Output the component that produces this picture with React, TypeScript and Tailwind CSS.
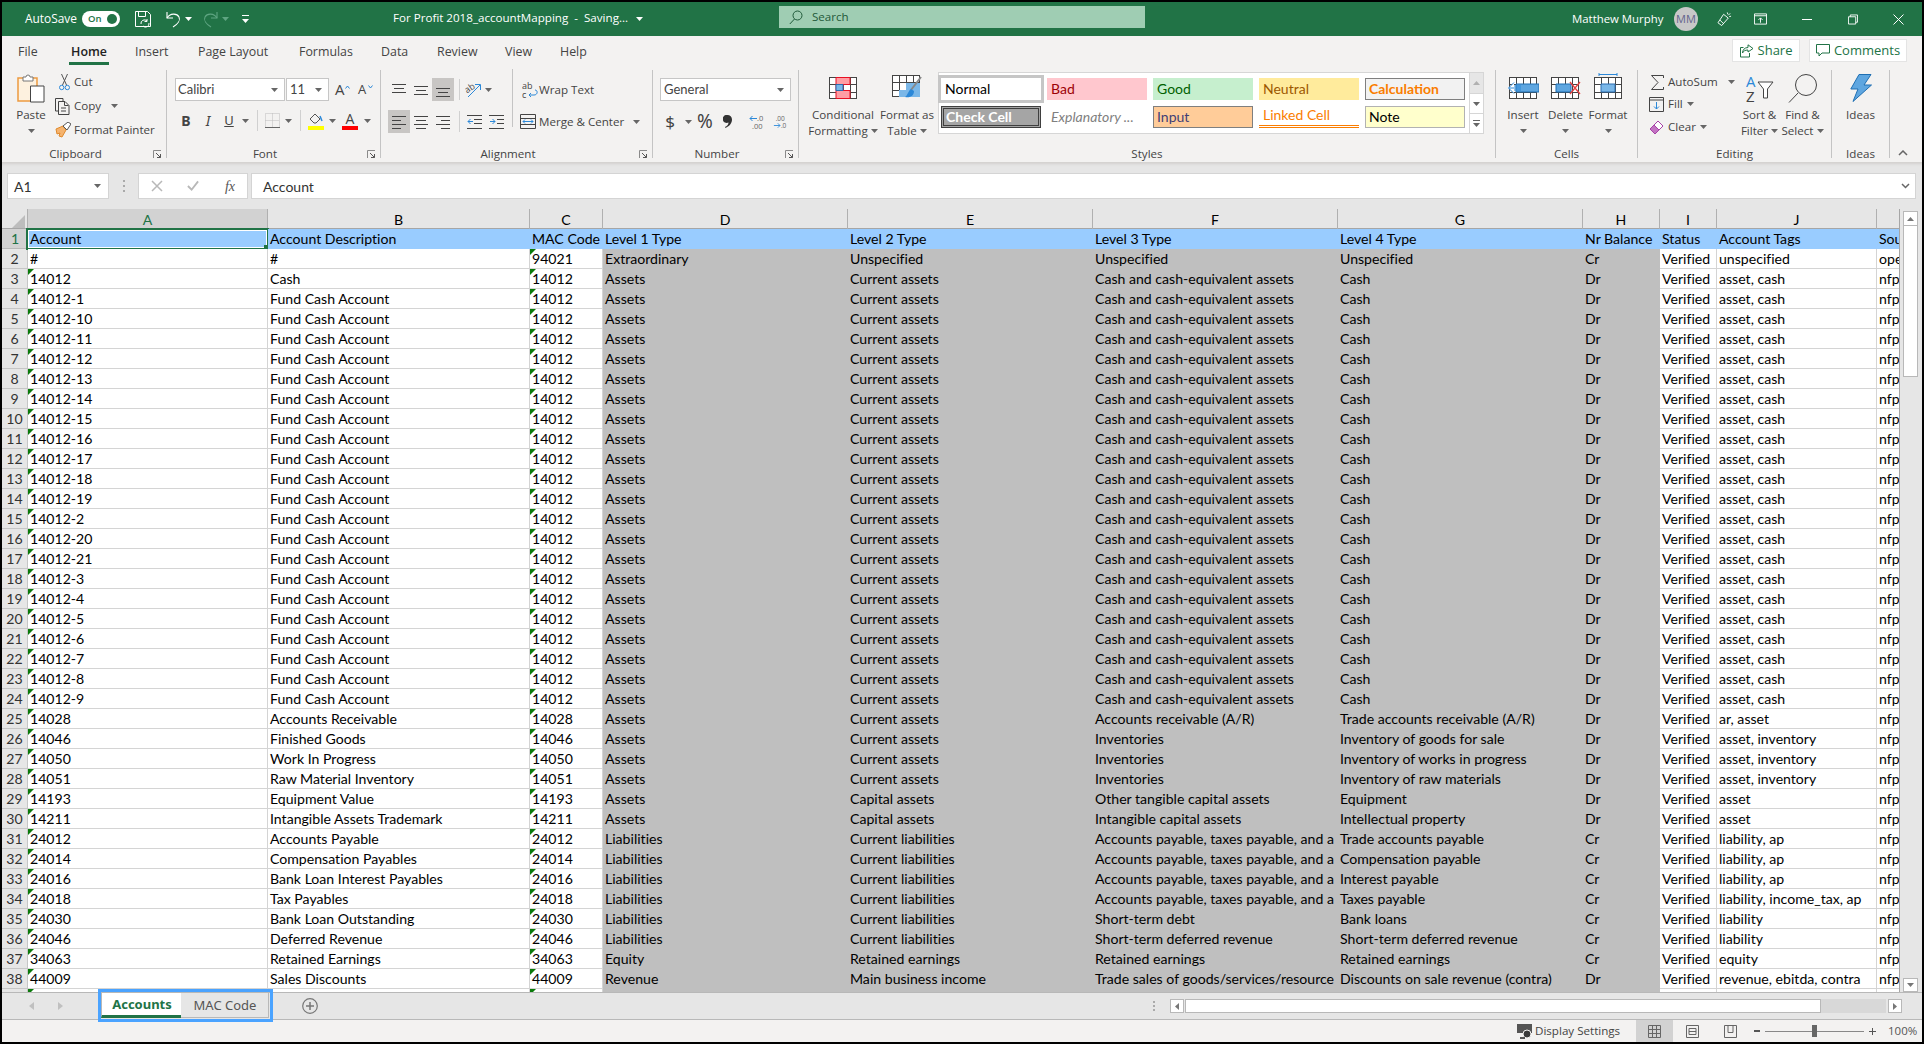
import React from "react";

const cols = "grid grid-cols-[26px_240px_262px_73px_245px_245px_245px_245px_77px_57px_160px_23px]";

type Row = { a: string; b: string; c: string; rest: string[]; noTriA?: boolean };

const cash = (a: string, b: string): Row => ({
  a, b, c: "14012",
  rest: ["Assets", "Current assets", "Cash and cash-equivalent assets", "Cash", "Dr", "Verified", "asset, cash", "nfp"],
});

const fundSuffixes = ["1", "10", "11", "12", "13", "14", "15", "16", "17", "18", "19", "2", "20", "21", "3", "4", "5", "6", "7", "8", "9"];

const rows: Row[] = [
  { a: "#", b: "#", c: "94021", rest: ["Extraordinary", "Unspecified", "Unspecified", "Unspecified", "Cr", "Verified", "unspecified", "ope"], noTriA: true },
  cash("14012", "Cash"),
  ...fundSuffixes.map((s) => cash("14012-" + s, "Fund Cash Account")),
  { a: "14028", b: "Accounts Receivable", c: "14028", rest: ["Assets", "Current assets", "Accounts receivable (A/R)", "Trade accounts receivable (A/R)", "Dr", "Verified", "ar, asset", "nfp"] },
  { a: "14046", b: "Finished Goods", c: "14046", rest: ["Assets", "Current assets", "Inventories", "Inventory of goods for sale", "Dr", "Verified", "asset, inventory", "nfp"] },
  { a: "14050", b: "Work In Progress", c: "14050", rest: ["Assets", "Current assets", "Inventories", "Inventory of works in progress", "Dr", "Verified", "asset, inventory", "nfp"] },
  { a: "14051", b: "Raw Material Inventory", c: "14051", rest: ["Assets", "Current assets", "Inventories", "Inventory of raw materials", "Dr", "Verified", "asset, inventory", "nfp"] },
  { a: "14193", b: "Equipment Value", c: "14193", rest: ["Assets", "Capital assets", "Other tangible capital assets", "Equipment", "Dr", "Verified", "asset", "nfp"] },
  { a: "14211", b: "Intangible Assets Trademark", c: "14211", rest: ["Assets", "Capital assets", "Intangible capital assets", "Intellectual property", "Dr", "Verified", "asset", "nfp"] },
  { a: "24012", b: "Accounts Payable", c: "24012", rest: ["Liabilities", "Current liabilities", "Accounts payable, taxes payable, and a", "Trade accounts payable", "Cr", "Verified", "liability, ap", "nfp"] },
  { a: "24014", b: "Compensation Payables", c: "24014", rest: ["Liabilities", "Current liabilities", "Accounts payable, taxes payable, and a", "Compensation payable", "Cr", "Verified", "liability, ap", "nfp"] },
  { a: "24016", b: "Bank Loan Interest Payables", c: "24016", rest: ["Liabilities", "Current liabilities", "Accounts payable, taxes payable, and a", "Interest payable", "Cr", "Verified", "liability, ap", "nfp"] },
  { a: "24018", b: "Tax Payables", c: "24018", rest: ["Liabilities", "Current liabilities", "Accounts payable, taxes payable, and a", "Taxes payable", "Cr", "Verified", "liability, income_tax, ap", "nfp"] },
  { a: "24030", b: "Bank Loan Outstanding", c: "24030", rest: ["Liabilities", "Current liabilities", "Short-term debt", "Bank loans", "Cr", "Verified", "liability", "nfp"] },
  { a: "24046", b: "Deferred Revenue", c: "24046", rest: ["Liabilities", "Current liabilities", "Short-term deferred revenue", "Short-term deferred revenue", "Cr", "Verified", "liability", "nfp"] },
  { a: "34063", b: "Retained Earnings", c: "34063", rest: ["Equity", "Retained earnings", "Retained earnings", "Retained earnings", "Cr", "Verified", "equity", "nfp"] },
  { a: "44009", b: "Sales Discounts", c: "44009", rest: ["Revenue", "Main business income", "Trade sales of goods/services/resource", "Discounts on sale revenue (contra)", "Dr", "Verified", "revenue, ebitda, contra", "nfp"] },
  { a: "", b: "", c: "", rest: ["", "", "", "", "", "", "", ""] },
];

const headers = ["Account", "Account Description", "MAC Code", "Level 1 Type", "Level 2 Type", "Level 3 Type", "Level 4 Type", "Nr Balance", "Status", "Account Tags", "Sou"];
const letters = ["A", "B", "C", "D", "E", "F", "G", "H", "I", "J", ""];

const Caret = ({ c = "#666" }: { c?: string }) => (
  <svg width="7" height="4" viewBox="0 0 7 4" className="shrink-0"><path d="M0 0h7L3.5 4z" fill={c} /></svg>
);

const Launcher = () => (
  <svg width="9" height="9" viewBox="0 0 9 9"><path d="M.5 8V.5H8" fill="none" stroke="#8a8a8a" /><path d="M3 3l4.5 4.5M4 7.5h3.5V4" fill="none" stroke="#555" /></svg>
);

const Sep = ({ c = "h-[88px]" }: { c?: string }) => <div className={"w-px bg-[#c4c4c4] self-center shrink-0 " + c} />;
const SmallSep = () => <div className="w-px h-[21px] bg-[#d0d0d0]" />;

const Slot = ({ c, children }: { c: string; children?: React.ReactNode }) => (
  <div className={"flex items-center justify-center shrink-0 " + c}>{children}</div>
);

const Group = ({ c, label, launcher, children }: { c: string; label: string; launcher?: boolean; children: React.ReactNode }) => (
  <div className={"flex flex-col h-[96px] shrink-0 " + c}>
    <div className="h-[80px] flex">{children}</div>
    <div className="h-[16px] flex items-center text-[11.6px] text-[#444]">
      <div className="flex-1 text-center leading-[16px]">{label}</div>
      {launcher && <div className="w-[17px] flex justify-center"><Launcher /></div>}
    </div>
  </div>
);

const AlignIcon = ({ lines }: { lines: [number, number, number][] }) => (
  <svg width="16" height="16" viewBox="0 0 16 16">
    {lines.map(([x1, x2, y], i) => <path key={i} d={`M${x1} ${y}.5H${x2}`} stroke="#444" />)}
  </svg>
);

const TableGrid = ({ w = 28, h = 22, sy = 0 }: { w?: number; h?: number; sy?: number }) => (
  <>
    <rect x="0.5" y={sy + 0.5} width={w - 1} height={h - 1} fill="#fff" stroke="#444" />
    {[1, 2, 3].map((i) => <path key={i} d={`M${Math.round((i * w) / 4) + 0.5} ${sy}v${h}`} stroke="#444" />)}
    {[1, 2].map((i) => <path key={i} d={`M0 ${sy + Math.round((i * h) / 3) + 0.5}h${w}`} stroke="#444" />)}
  </>
);

const BigBtn = ({ c, icon, lines, iconTop }: { c: string; icon: React.ReactNode; lines: React.ReactNode[]; iconTop: string }) => (
  <div className={"flex flex-col items-center shrink-0 text-[11.6px] leading-[16px] text-[#444] " + c}>
    <div className={"flex items-end justify-center " + iconTop}>{icon}</div>
    {lines.map((l, i) => <div key={i} className="flex items-center gap-[3px] whitespace-nowrap h-[16px]">{l}</div>)}
  </div>
);

const Tile = ({ c, children }: { c: string; children: React.ReactNode }) => (
  <div className={"h-[22px] w-[100px] flex items-center pb-[2px] text-[14px] font-['Lato'] whitespace-nowrap " + c}>{children}</div>
);

export default function App() {
  return (
    <div className="w-[1924px] h-[1044px] bg-black p-[2px] overflow-hidden font-['Open_Sans'] text-[11.6px] text-[#444]">
      <div className="w-[1920px] h-[1040px] flex flex-col bg-[#f3f2f1] overflow-hidden">
        {/* Title bar */}
        <div className="h-[34px] bg-[#217346] flex items-center text-white shrink-0">
          <div className="ml-[23px] w-[57px] text-[11.9px]">AutoSave</div>
          <div className="w-[38px] h-[16px] rounded-full bg-white flex items-center justify-between pl-[6px] pr-[3px]">
            <span className="text-[9.5px] font-semibold text-[#217346] leading-none">On</span>
            <span className="w-[10px] h-[10px] rounded-full bg-[#217346]" />
          </div>
          <Slot c="ml-[15px] w-[16px]">
            <svg width="16" height="17" viewBox="0 0 16 17" fill="none" stroke="#fff"><path d="M.5.5h12l3 3v12H.5z" /><path d="M3.5.5v5h7v-5" /><path d="M6 13a3.5 3.5 0 0 1 6-3M14 12a3.5 3.5 0 0 1-6 3M12 8v2.5H9.5" /></svg>
          </Slot>
          <Slot c="ml-[15px] w-[15px]">
            <svg width="15" height="17" viewBox="0 0 15 17" fill="none" stroke="#fff" strokeWidth="1.1"><path d="M1 1v6h6" /><path d="M1 7c3-5 10-5 12-1 1.500 3-1 7-6 10" /></svg>
          </Slot>
          <Slot c="ml-[3px] w-[8px]"><Caret c="#fff" /></Slot>
          <Slot c="ml-[11px] w-[15px]">
            <svg width="15" height="17" viewBox="0 0 15 17" fill="none" stroke="#5fa582" strokeWidth="1.1"><path d="M14 1v6H8" /><path d="M14 7C11 2 4 2 2 6c-1.500 3 1 7 6 10" /></svg>
          </Slot>
          <Slot c="ml-[3px] w-[8px]"><Caret c="#5fa582" /></Slot>
          <Slot c="ml-[12px] w-[8px]">
            <svg width="7" height="8" viewBox="0 0 7 8"><path d="M0 .5h7" stroke="#fff" /><path d="M0 4h7L3.500 8z" fill="#fff" /></svg>
          </Slot>
          <div className="ml-[144px] w-[234px] whitespace-nowrap -mt-[2px]">For Profit 2018_accountMapping&nbsp; -&nbsp; Saving...</div>
          <Slot c="ml-[8px] w-[8px]"><Caret c="#fff" /></Slot>
          <div className="ml-[136px] w-[366px] h-[22px] bg-[#9fcdb3] flex items-center text-[#1f5a3a] -mt-[4px]">
            <svg className="ml-[10px]" width="14" height="15" viewBox="0 0 14 15" fill="none" stroke="#1f5a3a"><circle cx="8.500" cy="5.500" r="4.500" /><path d="M5.500 9L.8 14" /></svg>
            <span className="ml-[9px]">Search</span>
          </div>
          <div className="ml-[427px] w-[91px] text-[11.4px] whitespace-nowrap">Matthew Murphy</div>
          <div className="ml-[11px] w-[24px] h-[24px] rounded-full bg-[#c8c8c8] flex items-center justify-center text-[11px] text-[#64648c]">MM</div>
          <Slot c="ml-[19px] w-[15px]">
            <svg width="16" height="16" viewBox="0 0 16 16" fill="none" stroke="#fff"><path d="M1 12L7 3l5 4-7 8z" /><path d="M3 9l4 4M11 1l.5 2M14 2l-2 2M15 5l-2 .5" /></svg>
          </Slot>
          <Slot c="ml-[22px] w-[13px]">
            <svg width="14" height="12" viewBox="0 0 14 12" fill="none" stroke="#fff"><path d="M.5.5h13v11H.5zM.5 2.500h13M7 10V5M4.800 7L7 4.800 9.200 7" /></svg>
          </Slot>
          <Slot c="ml-[35px] w-[10px]"><div className="w-[11px] h-px bg-white" /></Slot>
          <Slot c="ml-[36px] w-[10px]">
            <svg width="11" height="11" viewBox="0 0 11 11" fill="none" stroke="#fff"><path d="M.5 2.500h8v8h-8zM2.500 2.500v-2h8v8h-2" /></svg>
          </Slot>
          <Slot c="ml-[35px] w-[11px]">
            <svg width="11" height="11" viewBox="0 0 11 11" stroke="#fff"><path d="M.5.5l10 10M10.500.5l-10 10" /></svg>
          </Slot>
        </div>

        {/* Ribbon tabs */}
        <div className="h-[30px] flex items-start text-[12.4px] text-[#444] shrink-0">
          <div className="ml-[16px] w-[20px] mt-[7px] leading-[18px]">File</div>
          <div className="ml-[32px] relative mt-[7px] leading-[18px] w-[38px] text-center text-[#222] font-semibold">
            Home
            <div className="absolute -left-px -right-px top-[19px] h-[3px] bg-[#217346]" />
          </div>
          <div className="ml-[27px] w-[32px] mt-[7px] leading-[18px]">Insert</div>
          <div className="ml-[31px] w-[71px] mt-[7px] leading-[18px] whitespace-nowrap">Page Layout</div>
          <div className="ml-[30px] w-[53px] mt-[7px] leading-[18px]">Formulas</div>
          <div className="ml-[29px] w-[27px] mt-[7px] leading-[18px]">Data</div>
          <div className="ml-[29px] w-[40px] mt-[7px] leading-[18px]">Review</div>
          <div className="ml-[28px] w-[27px] mt-[7px] leading-[18px]">View</div>
          <div className="ml-[28px] w-[27px] mt-[7px] leading-[18px]">Help</div>
          <div className="ml-[1145px] mt-[3px] w-[68px] h-[23px] bg-white border border-[#e4e4e4] flex items-center justify-center gap-[4px] text-[#217346] text-[13px]">
            <svg width="14" height="14" viewBox="0 0 14 14" fill="none" stroke="#217346"><path d="M8 .8l5 3.700-5 3.500V6C5 6 3.500 7 2.500 9c0-3 2-5.500 5.500-5.500zM9.500 9v4H.5V3.500h3" /></svg>
            <span>Share</span>
          </div>
          <div className="ml-[9px] mt-[3px] w-[98px] h-[23px] bg-white border border-[#e4e4e4] flex items-center justify-center gap-[4px] text-[#217346] text-[13px]">
            <svg width="14" height="13" viewBox="0 0 14 13" fill="none" stroke="#217346"><path d="M.5.500h13v8.500H6l-3 3V9H.5z" /></svg>
            <span>Comments</span>
          </div>
        </div>

        {/* Ribbon body */}
        <div className="h-[96px] flex shrink-0">
          <Group c="w-[164px]" label="Clipboard" launcher>
            <div className="w-[53px] pl-[5px] flex flex-col items-center pt-[8px] leading-[16px]">
              <svg width="28" height="30" viewBox="0 0 28 30" fill="none">
                <path d="M1 4h19v23H1z" fill="#fdf1df" stroke="#ed9b40" strokeWidth="1.500" />
                <path d="M6 3h3a2 2 0 0 1 4 0h3v4H6z" fill="#fff" stroke="#777" />
                <path d="M13.500 12h13.500v16H13.500z" fill="#fff" stroke="#444" />
              </svg>
              <div className="mt-[3px]">Paste</div>
              <div className="mt-[6px]"><Caret /></div>
            </div>
            <div className="pt-[4px] flex flex-col">
              <div className="h-[24px] flex items-center">
                <Slot c="w-[19px]">
                  <svg width="11" height="17" viewBox="0 0 11 17" fill="none"><path d="M2.500 0l5 11M8.500 0l-5 11" stroke="#555" /><circle cx="2.700" cy="13.500" r="2.200" stroke="#2b88d8" /><circle cx="8.300" cy="13.500" r="2.200" stroke="#2b88d8" /></svg>
                </Slot>
                <span>Cut</span>
              </div>
              <div className="h-[24px] flex items-center">
                <Slot c="w-[19px] justify-start">
                  <svg width="16" height="17" viewBox="0 0 16 17" fill="none" stroke="#444"><path d="M3 13H.5V.5H8V3M3.500 3.500H10l4 4v9H3.500zM9.500 3.500v4h4M6 10h5M6 13h5" /></svg>
                </Slot>
                <span>Copy</span>
                <span className="ml-[10px]"><Caret /></span>
              </div>
              <div className="h-[24px] flex items-center">
                <Slot c="w-[19px] justify-start">
                  <svg width="16" height="16" viewBox="0 0 16 16" fill="none"><path d="M1 7l7-3 3 4-4 7-3-1 1-3-3 1z" fill="#f5b36e" stroke="#e08a2c" /><path d="M8 4l5-4 3 2-4 6z" fill="#fff" stroke="#555" /></svg>
                </Slot>
                <span className="whitespace-nowrap">Format Painter</span>
              </div>
            </div>
          </Group>
          <Sep />
          <Group c="w-[213px]" label="Font" launcher>
            <div className="pt-[12px] pl-[8px] flex flex-col">
              <div className="flex items-center">
                <div className="w-[110px] h-[23px] bg-white border border-[#c6c6c6] flex items-center justify-between pl-[2px] pr-[6px] font-['Lato'] text-[13px]">Calibri<Caret /></div>
                <div className="ml-px w-[43px] h-[23px] bg-white border border-[#c6c6c6] flex items-center justify-between pl-[3px] pr-[6px] font-['Lato'] text-[13px]">11<Caret /></div>
                <div className="ml-[6px] w-[10px] text-[15px] leading-none">A</div>
                <svg width="5" height="4" viewBox="0 0 5 4" className="mb-[6px]" fill="none" stroke="#2b88d8"><path d="M.5 3.500l2-2.500 2 2.500" /></svg>
                <div className="ml-[8px] w-[10px] text-[13px] leading-none">A</div>
                <svg width="5" height="4" viewBox="0 0 5 4" className="mb-[6px]" fill="none" stroke="#2b88d8"><path d="M.5.500l2 2.500 2-2.500" /></svg>
              </div>
              <div className="flex items-center mt-[8px] h-[23px]">
                <Slot c="w-[22px] font-bold text-[14px] font-['Noto_Sans'] text-[#444]">B</Slot>
                <Slot c="w-[22px] italic text-[14px] font-['Noto_Sans'] text-[#444]">I</Slot>
                <Slot c="w-[20px] underline text-[13px] font-['Noto_Sans'] text-[#444]">U</Slot>
                <Slot c="w-[13px]"><Caret /></Slot>
                <Slot c="w-[10px]"><SmallSep /></Slot>
                <Slot c="w-[20px]">
                  <svg width="15" height="15" viewBox="0 0 15 15" fill="none"><path d="M.5.500h14v14H.5zM7.500.5v14M.5 7.500h14" stroke="#bdbdbd" strokeDasharray="1 1" /><path d="M0 14.500h15" stroke="#666" /></svg>
                </Slot>
                <Slot c="w-[13px]"><Caret /></Slot>
                <Slot c="w-[11px]"><SmallSep /></Slot>
                <Slot c="w-[20px]">
                  <svg width="16" height="18" viewBox="0 0 16 18" fill="none"><path d="M2 7l5-5 5 5-4 4H6z" stroke="#555" /><path d="M14 9l-2-5" stroke="#2b88d8" strokeWidth="1.500" /><path d="M0 14h16v4H0z" fill="#ffff00" /></svg>
                </Slot>
                <Slot c="w-[12px]"><Caret /></Slot>
                <Slot c="w-[23px]">
                  <svg width="16" height="18" viewBox="0 0 16 18" fill="none"><text x="8" y="12" textAnchor="middle" fontSize="14" fill="#444" fontFamily="Open Sans">A</text><path d="M0 14h16v4H0z" fill="#ff0000" /></svg>
                </Slot>
                <Slot c="w-[12px]"><Caret /></Slot>
              </div>
            </div>
          </Group>
          <Sep />
          <Group c="w-[271px]" label="Alignment" launcher>
            <div className="ml-[7px] w-[120px] pt-[12px] flex flex-col">
              <div className="flex items-center h-[23px]">
                <Slot c="w-[22px] h-[23px]"><AlignIcon lines={[[1, 15, 2], [3, 13, 6], [1, 15, 10]]} /></Slot>
                <Slot c="w-[22px] h-[23px]"><AlignIcon lines={[[1, 15, 4], [3, 13, 8], [1, 15, 12]]} /></Slot>
                <Slot c="w-[22px] h-[23px] bg-[#c8c6c4]"><AlignIcon lines={[[1, 15, 6], [3, 13, 10], [1, 15, 14]]} /></Slot>
                <Slot c="w-[10px]"><SmallSep /></Slot>
                <Slot c="w-[20px]">
                  <svg width="18" height="16" viewBox="0 0 18 16" fill="none"><text x="0" y="9" fontSize="9" fill="#444" fontFamily="Open Sans" transform="rotate(-35 5 7)">ab</text><path d="M3 15L15 3M10 2.500h5.500V8" stroke="#2b88d8" /></svg>
                </Slot>
                <Slot c="w-[8px]"><Caret /></Slot>
              </div>
              <div className="flex items-center h-[23px] mt-[9px]">
                <Slot c="w-[22px] h-[23px] bg-[#c8c6c4]"><AlignIcon lines={[[1, 15, 2], [1, 10, 6], [1, 15, 10], [1, 10, 14]]} /></Slot>
                <Slot c="w-[22px] h-[23px]"><AlignIcon lines={[[1, 15, 2], [3, 13, 6], [1, 15, 10], [3, 13, 14]]} /></Slot>
                <Slot c="w-[22px] h-[23px]"><AlignIcon lines={[[1, 15, 2], [6, 15, 6], [1, 15, 10], [6, 15, 14]]} /></Slot>
                <Slot c="w-[10px]"><SmallSep /></Slot>
                <Slot c="w-[21px]">
                  <svg width="15" height="14" viewBox="0 0 15 14" fill="none"><path d="M0 .5h15M7 4.500h8M7 8.500h8M0 13.500h15" stroke="#444" /><path d="M6 6.500H1M3.500 4L1 6.500 3.500 9" stroke="#2b88d8" /></svg>
                </Slot>
                <Slot c="w-[22px]">
                  <svg width="15" height="14" viewBox="0 0 15 14" fill="none"><path d="M0 .5h15M8 4.500h7M8 8.500h7M0 13.500h15" stroke="#444" /><path d="M1 6.500h5M3.500 4L6 6.500 3.500 9" stroke="#2b88d8" /></svg>
                </Slot>
              </div>
            </div>
            <Sep c="h-[58px] mt-[-16px] ml-[4px]" />
            <div className="pt-[12px] flex flex-col whitespace-nowrap">
              <div className="flex items-center h-[23px] ml-[9px]">
                <svg width="16" height="18" viewBox="0 0 16 18" fill="none"><text x="0" y="8" fontSize="9" fill="#444" fontFamily="Open Sans">ab</text><text x="0" y="17" fontSize="9" fill="#444" fontFamily="Open Sans">c</text><path d="M13 9c3 0 3 5-1 5H7M9 12l-2 2 2 2" stroke="#2b88d8" /></svg>
                <span className="ml-[1px]">Wrap Text</span>
              </div>
              <div className="flex items-center h-[23px] mt-[9px] ml-[7px]">
                <svg width="16" height="15" viewBox="0 0 16 15" fill="none"><path d="M.5.500h15v14H.5zM.5 4.500h15M.5 10.500h15" stroke="#444" /><path d="M3 7.500h10M5 5.500l-2 2 2 2M11 5.500l2 2-2 2" stroke="#2b88d8" /></svg>
                <span className="ml-[3px] w-[86px]">Merge &amp; Center</span>
                <span className="ml-[8px]"><Caret /></span>
              </div>
            </div>
          </Group>
          <Sep />
          <Group c="w-[145px]" label="Number" launcher>
            <div className="ml-[7px] pt-[12px] flex flex-col">
              <div className="w-[131px] h-[23px] bg-white border border-[#c6c6c6] flex items-center justify-between pl-[3px] pr-[6px] font-['Lato'] text-[13px]">General<Caret /></div>
              <div className="flex items-center h-[23px] mt-[9px]">
                <Slot c="w-[20px] text-[17px] font-['Noto_Sans']">$</Slot>
                <Slot c="w-[16px]"><Caret /></Slot>
                <Slot c="w-[18px] text-[19px] leading-none font-['Noto_Sans']">%</Slot>
                <Slot c="w-[26px]">
                  <svg width="9" height="13" viewBox="0 0 9 13"><path d="M4.500 0a4.500 4.500 0 0 1 4.500 4.500c0 4-3 7-6.500 8.500l-.5-1c2-1 3.500-2.500 3.500-4.500a4 4 0 1 1-1-7.500z" fill="#333" /></svg>
                </Slot>
                <Slot c="w-[0px]"><SmallSep /></Slot>
                <Slot c="w-[33px]">
                  <svg width="16" height="16" viewBox="0 0 16 16" fill="none"><text x="8" y="7" fontSize="7.500" fill="#666" fontFamily="Open Sans">.0</text><text x="3" y="15" fontSize="7.500" fill="#666" fontFamily="Open Sans">.00</text><path d="M8 4.500H1M3.500 2L1 4.500 3.500 7" stroke="#2b88d8" /></svg>
                </Slot>
                <Slot c="w-[14px]">
                  <svg width="16" height="16" viewBox="0 0 16 16" fill="none"><text x="3" y="7" fontSize="7.500" fill="#666" fontFamily="Open Sans">.00</text><text x="9" y="15" fontSize="7.500" fill="#666" fontFamily="Open Sans">.0</text><path d="M1 12h7M5.500 9.500L8 12l-2.500 2.500" stroke="#2b88d8" /></svg>
                </Slot>
              </div>
            </div>
          </Group>
          <Sep />
          <Group c="w-[696px]" label="Styles">
            <BigBtn
              c="ml-[6px] w-[76px]"
              iconTop="mt-[11px] mb-[8px] h-[22px]"
              icon={
                <svg width="28" height="22" viewBox="0 0 28 22" fill="none">
                  <TableGrid />
                  <path d="M7 .5h14v7H14v6h7v8H7V.5z" fill="#ff9da4" stroke="#e81123" />
                  <path d="M7 7.500h7v6H7z" fill="#7ab7e8" stroke="#2b6cb0" />
                </svg>
              }
              lines={["Conditional", <>Formatting <Caret /></>]}
            />
            <BigBtn
              c="w-[52px]"
              iconTop="mt-[11px] mb-[8px] h-[22px]"
              icon={
                <svg width="31" height="24" viewBox="0 0 31 24" fill="none">
                  <TableGrid />
                  <path d="M14 8h14v14H7v-7h7z" fill="#7ab7e8" />
                  <path d="M29 2L19 15" stroke="#888" strokeWidth="2" />
                  <path d="M19 14c-3 2-3 6-6 8 5 1 9-1 9-6z" fill="#2b88d8" />
                </svg>
              }
              lines={["Format as", <>Table <Caret /></>]}
            />
            <div className="ml-[5px] mt-[6px] w-[546px] h-[62px] bg-white border border-[#d6d6d6] flex">
              <div className="flex-1 pl-[2px] pt-[5px] grid grid-cols-[repeat(5,100px)] gap-x-[6px] gap-y-[6px] content-start">
                <Tile c="pl-[4px] bg-white text-black outline-3 outline-[#c6c6c6]">Normal</Tile>
                <Tile c="pl-[4px] bg-[#ffc7ce] text-[#9c0006]">Bad</Tile>
                <Tile c="pl-[4px] bg-[#c6efce] text-[#006100]">Good</Tile>
                <Tile c="pl-[4px] bg-[#ffeb9c] text-[#9c5700]">Neutral</Tile>
                <Tile c="pl-[3px] bg-[#f2f2f2] text-[#fa7d00] font-bold border border-[#7f7f7f]">Calculation</Tile>
                <Tile c="pl-[2px] bg-[#a5a5a5] text-white font-bold border-[3px] border-double border-[#3f3f3f]">Check Cell</Tile>
                <Tile c="pl-[4px] text-[#7f7f7f] italic">Explanatory ...</Tile>
                <Tile c="pl-[3px] bg-[#ffcc99] text-[#3f3f76] border border-[#7f7f7f]">Input</Tile>
                <Tile c="pl-[4px] text-[#fa7d00] border-b-[3px] border-double border-[#fa7d00]">Linked Cell</Tile>
                <Tile c="pl-[3px] bg-[#ffffcc] text-black border border-[#b2b2b2]">Note</Tile>
              </div>
              <div className="w-[14px] flex flex-col border-l border-[#d6d6d6]">
                <div className="h-[21px] bg-[#e6e6e6] border-b border-[#d6d6d6] flex items-center justify-center"><svg width="7" height="4" viewBox="0 0 7 4"><path d="M0 4h7L3.500 0z" fill="#b0b0b0" /></svg></div>
                <div className="h-[20px] border-b border-[#d6d6d6] flex items-center justify-center"><Caret /></div>
                <div className="flex-1 flex flex-col items-center justify-center gap-[2px]"><div className="w-[7px] h-px bg-[#666]" /><Caret /></div>
              </div>
            </div>
          </Group>
          <Sep />
          <Group c="w-[141px]" label="Cells">
            <BigBtn
              c="ml-[6px] w-[42px]"
              iconTop="mt-[11px] mb-[8px] h-[22px]"
              icon={
                <svg width="32" height="22" viewBox="0 0 32 22" fill="none">
                  <g transform="translate(2 0)"><TableGrid /></g>
                  <path d="M9 7h23v8H9z" fill="#5ea6e0" stroke="#1f6fb2" />
                  <path d="M14 11H2M7 5.500L1.500 11 7 16.500M7 9h7M7 13h7" stroke="#2b88d8" fill="#fff" />
                </svg>
              }
              lines={["Insert", <Caret />]}
            />
            <BigBtn
              c="w-[43px]"
              iconTop="mt-[11px] mb-[8px] h-[22px]"
              icon={
                <svg width="30" height="22" viewBox="0 0 30 22" fill="none">
                  <TableGrid w={28} />
                  <path d="M5 7h15v8H5z" fill="#5ea6e0" stroke="#1f6fb2" />
                  <path d="M19 5l10 12M29 5L19 17" stroke="#e8403f" strokeWidth="1.300" />
                </svg>
              }
              lines={["Delete", <Caret />]}
            />
            <BigBtn
              c="w-[42px]"
              iconTop="mt-[7px] mb-[8px] h-[26px]"
              icon={
                <svg width="28" height="26" viewBox="0 0 28 26" fill="none">
                  <path d="M5 0v3M23 0v3M5 1.500h18" stroke="#2b88d8" />
                  <g transform="translate(0 4)"><TableGrid /></g>
                  <path d="M7 11h14v8H7z" fill="#7ab7e8" stroke="#2b6cb0" />
                </svg>
              }
              lines={["Format", <Caret />]}
            />
          </Group>
          <Sep />
          <Group c="w-[193px]" label="Editing">
            <div className="ml-[11px] w-[89px] pt-[5px] flex flex-col">
              <div className="h-[22px] flex items-center">
                <svg className="ml-[2px]" width="13" height="15" viewBox="0 0 13 15" fill="none" stroke="#444"><path d="M12.500 3V.5H.5L7 7.500.5 14.500h12V12" /></svg>
                <span className="ml-[4px] w-[49px]">AutoSum</span>
                <span className="ml-[11px]"><Caret /></span>
              </div>
              <div className="h-[22px] flex items-center">
                <svg width="15" height="15" viewBox="0 0 15 15" fill="none"><path d="M.5.5h14v14H.5zM.5 3h14" stroke="#444" /><path d="M7.500 5v7M5 9.500l2.500 2.500L10 9.500" stroke="#2b88d8" /></svg>
                <span className="ml-[4px]">Fill</span>
                <span className="ml-[4px]"><Caret /></span>
              </div>
              <div className="h-[22px] mt-[1px] flex items-center">
                <svg width="15" height="15" viewBox="0 0 15 15" fill="none"><path d="M1 9l8-8 5 5-8 8z" fill="#fff" stroke="#a742a7" /><path d="M1 9l4-4 5 5-4 4z" fill="#c273c2" stroke="#a742a7" /></svg>
                <span className="ml-[4px]">Clear</span>
                <span className="ml-[4px]"><Caret /></span>
              </div>
            </div>
            <BigBtn
              c="w-[43px]"
              iconTop="mt-[9px] mb-[5px] h-[27px]"
              icon={
                <svg width="28" height="27" viewBox="0 0 28 27" fill="none">
                  <text x="0" y="12" fontSize="15" fill="#2b88d8" fontFamily="Open Sans">A</text>
                  <text x="0" y="27" fontSize="15" fill="#444" fontFamily="Open Sans">Z</text>
                  <path d="M12 7h15l-5.500 7v9l-4 0v-9z" fill="#fff" stroke="#444" />
                </svg>
              }
              lines={["Sort &", <>Filter <Caret /></>]}
            />
            <BigBtn
              c="w-[43px]"
              iconTop="mt-[8px] mb-[4px] h-[29px]"
              icon={
                <svg width="29" height="29" viewBox="0 0 29 29" fill="none" stroke="#444"><circle cx="18" cy="11" r="10.500" /><path d="M10 19L1 28.500" /></svg>
              }
              lines={["Find &", <>Select <Caret /></>]}
            />
          </Group>
          <Sep />
          <Group c="w-[57px]" label="Ideas">
            <BigBtn
              c="w-[57px]"
              iconTop="mt-[8px] mb-[5px] h-[28px]"
              icon={
                <svg width="22" height="28" viewBox="0 0 22 28" fill="none"><path d="M9 .5h12L14 11h7.500L3 27.500 8 15H.8z" fill="#5ea6e0" stroke="#1f6fb2" /></svg>
              }
              lines={["Ideas"]}
            />
          </Group>
          <Sep />
          <div className="flex-1 flex items-end justify-center pb-[6px] pr-[6px]">
            <svg width="10" height="6" viewBox="0 0 10 6" fill="none" stroke="#666" strokeWidth="1.500"><path d="M1 5l4-4 4 4" /></svg>
          </div>
        </div>

        {/* Formula bar */}
        <div className="h-[47px] bg-[#e6e6e6] shadow-[inset_0_4px_3px_-2px_#d2d0ce] flex items-start pt-[11px] shrink-0 text-[14px] font-['Lato'] text-[#333]">
          <div className="ml-[5px] w-[102px] h-[26px] bg-white border border-[#d4d4d4] flex items-center justify-between pl-[6px] pr-[7px]">A1<Caret /></div>
          <div className="ml-[13px] w-[3px] h-[26px] flex flex-col justify-center gap-[3px] items-center"><span className="w-[2px] h-[2px] bg-[#aaa]" /><span className="w-[2px] h-[2px] bg-[#aaa]" /><span className="w-[2px] h-[2px] bg-[#aaa]" /></div>
          <div className="ml-[13px] w-[110px] h-[26px] bg-white border border-[#d4d4d4] flex items-center">
            <Slot c="ml-[12px] w-[12px]"><svg width="12" height="12" viewBox="0 0 12 12" stroke="#b8b8b8" strokeWidth="1.500"><path d="M1 1l10 10M11 1L1 11" /></svg></Slot>
            <Slot c="ml-[24px] w-[12px]"><svg width="13" height="12" viewBox="0 0 13 12" fill="none" stroke="#b8b8b8" strokeWidth="2"><path d="M1 6l4 4 7-9" /></svg></Slot>
            <Slot c="ml-[24px] w-[14px] italic font-['Liberation_Serif'] text-[14px] text-[#555]">fx</Slot>
          </div>
          <div className="ml-[3px] w-[1665px] h-[26px] bg-white border border-[#d4d4d4] flex items-center justify-between pl-[11px] pr-[5px]">
            Account
            <svg width="9" height="6" viewBox="0 0 9 6" fill="none" stroke="#666" strokeWidth="1.500"><path d="M1 1l3.500 3.500L8 1" /></svg>
          </div>
        </div>

        {/* Sheet */}
        <div className="h-[783px] flex shrink-0 overflow-hidden bg-[#e6e6e6]">
          <div className="w-[1898px] h-[783px] overflow-hidden font-['Lato'] text-[14.1px] [font-variant-ligatures:none] text-black border-r border-[#a6a6a6]">
            <div className={cols + " h-[20px] bg-[#e6e6e6] border-b border-[#a6a6a6]"}>
              <div className="flex items-end justify-end pr-[2px] pb-[2px] border-r border-[#b0b0b0]">
                <svg width="13" height="13" viewBox="0 0 13 13"><path d="M13 0v13H0z" fill="#bdbdbd" /></svg>
              </div>
              {letters.map((l, i) => (
                <div key={i} className={"flex items-center justify-center border-r border-[#b0b0b0] " + (i === 0 ? "bg-[#d2d2d2] text-[#217346]" : "")}>{l}</div>
              ))}
            </div>
            <div className={cols + " h-[20px]"}>
              <div className="bg-[#d2d2d2] text-[#217346] text-center leading-[19px] border-b border-[#b8b8b8]">1</div>
              {headers.map((h, i) => (
                <div key={i} className={"bg-[#99ccff] pl-[2px] leading-[20px] whitespace-nowrap relative " + (i === 0 ? "" : "overflow-hidden")}>
                  {h}
                  {i === 0 && (
                    <div className="absolute -left-[2px] top-[-1px] -right-[1px] bottom-[-1px] border-2 border-[#217346] outline outline-white -outline-offset-3">
                      <div className="absolute -right-[3px] -bottom-[3px] w-[6px] h-[6px] bg-[#217346]" />
                    </div>
                  )}
                </div>
              ))}
            </div>
            {rows.map((r, idx) => {
              const all = [r.a, r.b, r.c, ...r.rest];
              return (
                <div key={idx} className={cols + " h-[20px]"}>
                  <div className="bg-[#e6e6e6] text-[#333] text-center leading-[19px] border-b border-r border-[#c6c6c6]">{idx + 2}</div>
                  {all.map((v, i) => {
                    const grey = i >= 3 && i <= 7;
                    const tri = (i === 0 && !r.noTriA) || i === 2;
                    return (
                      <div
                        key={i}
                        className={
                          "relative overflow-hidden whitespace-nowrap pl-[2px] leading-[20px] " +
                          (grey ? "bg-[#bfbfbf]" : "bg-white border-r border-b border-[#d4d4d4]")
                        }
                      >
                        {tri && <div className="absolute left-0 top-0 w-[6px] h-[6px] bg-[#0b7a0b] [clip-path:polygon(0_0,100%_0,0_100%)]" />}
                        {v}
                      </div>
                    );
                  })}
                </div>
              );
            })}
          </div>
          {/* Vertical scrollbar */}
          <div className="w-[22px] h-[783px] pl-[3px] pt-[2px] flex flex-col">
            <div className="w-[15px] h-[15px] bg-white border border-[#b8b8b8] flex items-center justify-center"><svg width="7" height="4" viewBox="0 0 7 4"><path d="M0 4h7L3.500 0z" fill="#777" /></svg></div>
            <div className="w-[15px] h-[151px] bg-white border border-t-0 border-[#b8b8b8]" />
            <div className="flex-1" />
            <div className="w-[15px] h-[14px] bg-white border border-[#b8b8b8] flex items-center justify-center"><Caret c="#777" /></div>
          </div>
        </div>

        {/* Sheet tabs */}
        <div className="h-[28px] bg-[#e6e6e6] border-t border-b border-[#b8b8b8] flex items-center shrink-0 relative z-10 font-['Noto_Sans'] text-[13px]">
          <Slot c="ml-[26px] w-[6px]"><svg width="5" height="8" viewBox="0 0 5 8"><path d="M5 0v8L0 4z" fill="#c0c0c0" /></svg></Slot>
          <Slot c="ml-[23px] w-[6px]"><svg width="5" height="8" viewBox="0 0 5 8"><path d="M0 0v8l5-4z" fill="#c0c0c0" /></svg></Slot>
          <div className="ml-[35px] self-start -mt-[4px] h-[33px] w-[175px] border-[3px] border-[#4aa3ff] flex items-start pt-px shrink-0">
            <div className="w-[80px] h-[25px] pt-[2px] pl-[1px] bg-white border-b-[3px] border-[#217346] border-l border-l-[#b8b8b8] flex items-center justify-center font-bold text-[#217346]">Accounts</div>
            <div className="w-[88px] h-[25px] pt-[1px] pl-[1px] border-r border-[#b8b8b8] border-b border-b-[#b8b8b8] flex items-center justify-center text-[#555]">MAC Code</div>
          </div>
          <Slot c="ml-[29px] w-[16px]"><svg width="16" height="16" viewBox="0 0 16 16" fill="none" stroke="#777" strokeWidth="1.200"><circle cx="8" cy="8" r="7.300" /><path d="M8 4v8M4 8h8" strokeWidth="1.500" /></svg></Slot>
          <div className="ml-[834px] w-[3px] flex flex-col gap-[2px] items-center"><span className="w-[2px] h-[2px] bg-[#aaa]" /><span className="w-[2px] h-[2px] bg-[#aaa]" /><span className="w-[2px] h-[2px] bg-[#aaa]" /></div>
          <div className="ml-[15px] w-[14px] h-[14px] bg-white border border-[#b8b8b8] flex items-center justify-center"><svg width="4" height="7" viewBox="0 0 4 7"><path d="M4 0v7L0 3.500z" fill="#777" /></svg></div>
          <div className="w-[701px] h-[14px] bg-[#d8d8d8] ml-px">
            <div className="w-[636px] h-[14px] bg-white border border-[#b8b8b8]" />
          </div>
          <div className="ml-[2px] w-[14px] h-[14px] bg-white border border-[#b8b8b8] flex items-center justify-center"><svg width="4" height="7" viewBox="0 0 4 7"><path d="M0 0v7l4-3.500z" fill="#777" /></svg></div>
        </div>

        {/* Status bar */}
        <div className="flex-1 flex items-center text-[#444]">
          <svg className="ml-[1515px]" width="16" height="16" viewBox="0 0 16 16">
            <path d="M0 1h15v9H0z" fill="#555" />
            <circle cx="10" cy="11" r="4" fill="#3a3a3a" stroke="#f3f2f1" />
            <path d="M3 14h5v2H3z" fill="#555" />
          </svg>
          <span className="ml-[2px] w-[99px] whitespace-nowrap">Display Settings</span>
          <div className="ml-[2px] w-[37px] h-[22px] bg-[#d2d2d2] flex items-center justify-center">
            <svg width="13" height="13" viewBox="0 0 13 13" fill="none" stroke="#666"><path d="M.5.5h12v12H.5zM4.500.5v12M8.500.5v12M.5 4.500h12M.5 8.500h12" /></svg>
          </div>
          <Slot c="w-[39px]"><svg width="13" height="13" viewBox="0 0 13 13" fill="none" stroke="#666"><path d="M.5.5h12v12H.5zM3 3.500h7v6H3zM3 6.500h7" /></svg></Slot>
          <Slot c="w-[37px]"><svg width="13" height="13" viewBox="0 0 13 13" fill="none" stroke="#666"><path d="M.5.5h12v12H.5zM4 .5v7h5v-7" /></svg></Slot>
          <div className="ml-[5px] w-[6px] h-[2px] bg-[#555]" />
          <div className="ml-[5px] w-[99px] h-px bg-[#888] flex items-center pl-[47px]"><div className="w-[5px] h-[12px] bg-[#666]" /></div>
          <div className="ml-[5px] w-[7px] h-[7px] relative"><div className="absolute left-0 right-0 top-[3px] h-px bg-[#555]" /><div className="absolute top-0 bottom-0 left-[3px] w-px bg-[#555]" /></div>
          <span className="ml-[12px] text-[11.5px] text-[#555]">100%</span>
        </div>
      </div>
    </div>
  );
}
